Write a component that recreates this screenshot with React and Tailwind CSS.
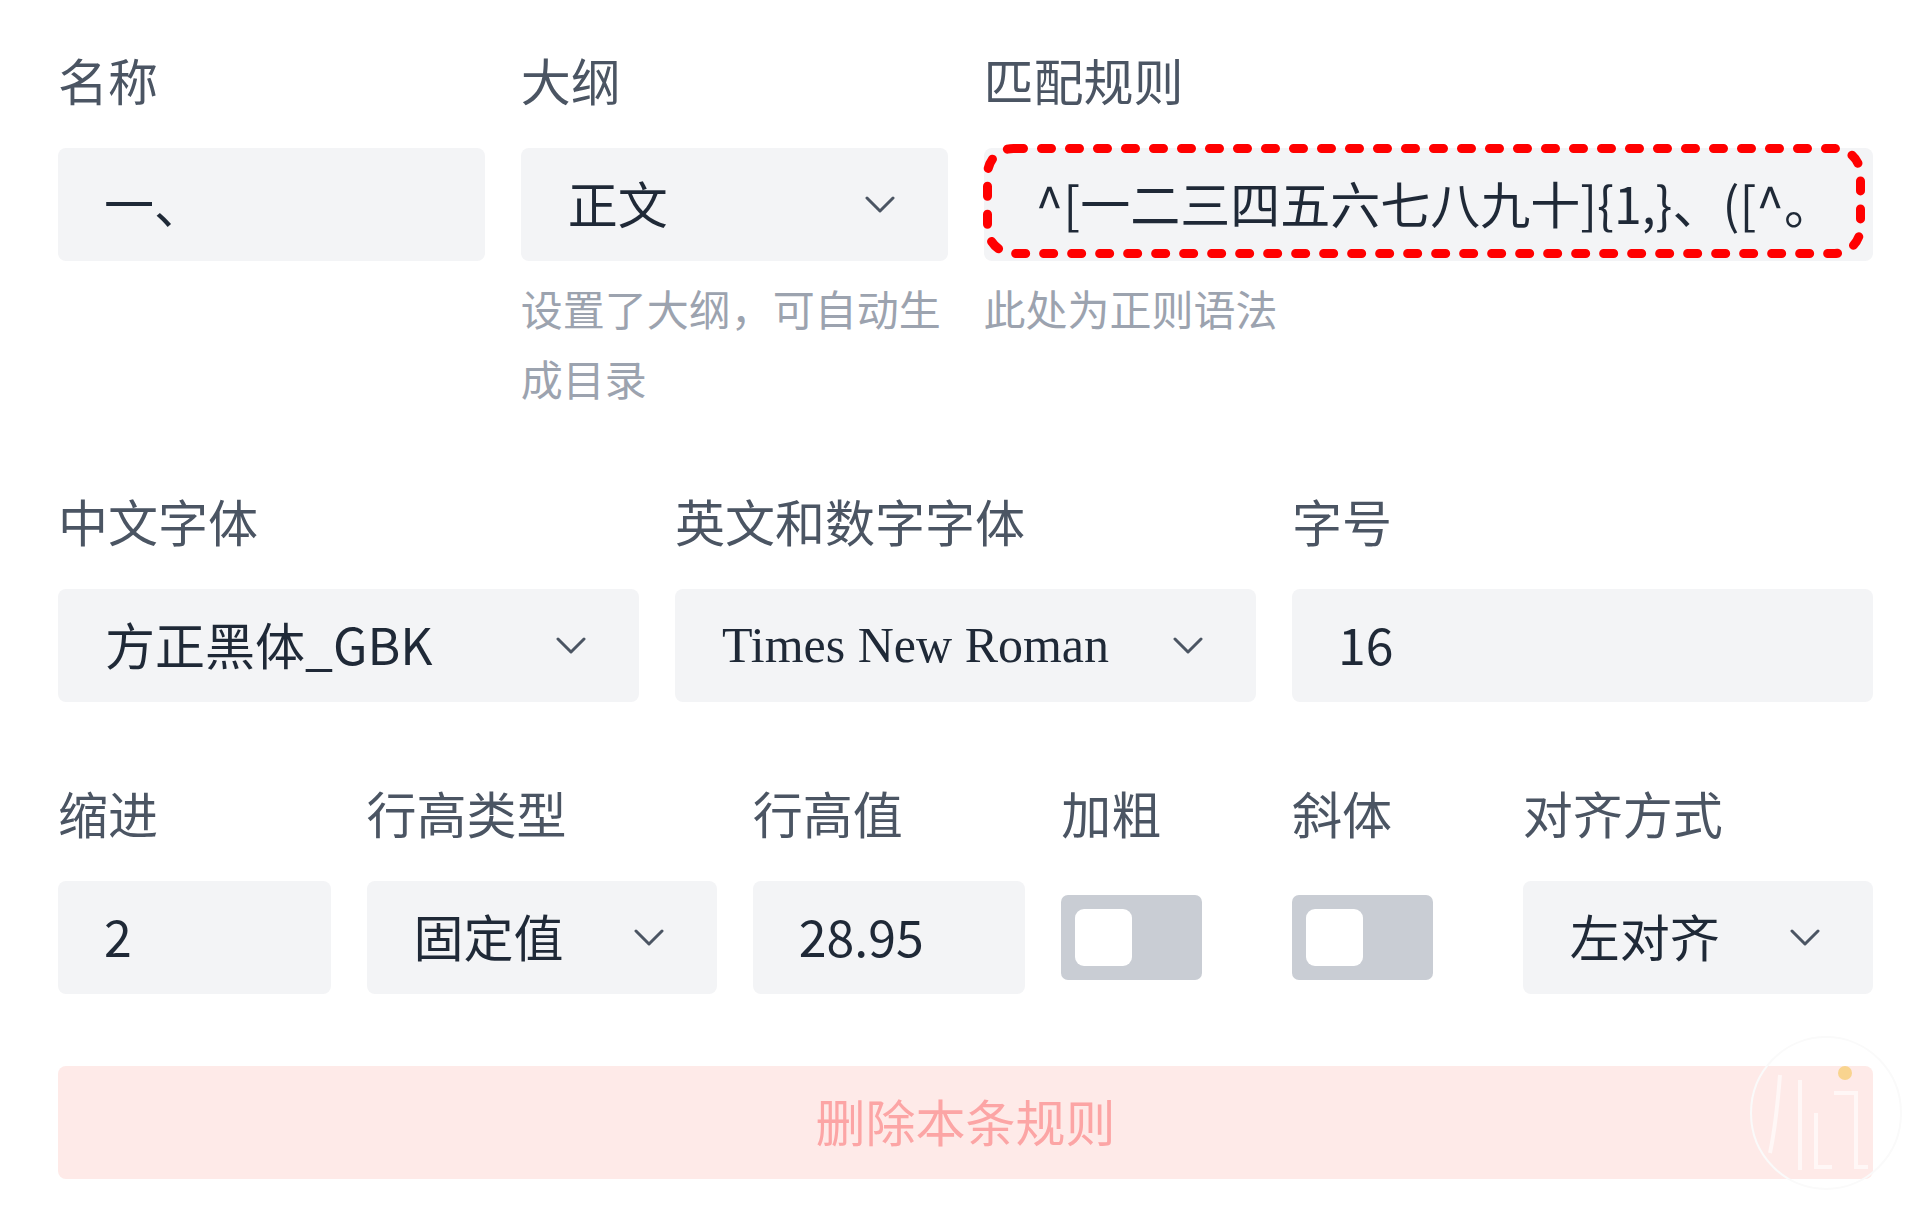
import React, { useState } from "react";

const FONT = "font-['Noto_Sans_CJK_SC',sans-serif]";

const Chevron = () => (
  <svg width="30" height="17" viewBox="0 0 30 17" className="shrink-0">
    <polyline points="2,2 15,15 28,2" fill="none" stroke="#4b5563" strokeWidth="3" strokeLinecap="round" strokeLinejoin="round" />
  </svg>
);

const Label = ({ children }) => (
  <div className="h-[64px] leading-[64px] mb-[37px] text-[50px] text-[#4b5563] whitespace-nowrap">{children}</div>
);

const Field = ({ value, className = "" }) => (
  <div className={`h-[113px] rounded-lg bg-[#f3f4f6] flex items-center pl-[46px] pb-[4px] text-[50px] text-[#1f2937] whitespace-nowrap overflow-hidden ${className}`}>
    {value}
  </div>
);

const Select = ({ value, serif }) => (
  <div className="h-[113px] rounded-lg bg-[#f3f4f6] flex items-center justify-between pl-[47px] pr-[53px] text-[50px] text-[#1f2937] whitespace-nowrap">
    <span className={serif ? "font-['Liberation_Serif',serif]" : "pb-[4px]"}>{value}</span>
    <Chevron />
  </div>
);

const Toggle = ({ on, onClick }) => (
  <div className="h-[113px] flex items-center">
    <button
      onClick={onClick}
      className={`w-[141px] h-[85px] rounded-[7px] p-[14px] flex items-center ${on ? "bg-[#3b82f6] justify-end" : "bg-[#c9cdd4] justify-start"}`}
    >
      <span className="block w-[57px] h-[57px] rounded-[9px] bg-white" />
    </button>
  </div>
);

export default function App() {
  const [bold, setBold] = useState(false);
  const [italic, setItalic] = useState(false);

  return (
    <div className={`relative min-h-[1209px] bg-white pl-[58px] pr-[47px] pt-[47px] ${FONT}`}>
      {/* 第一行 */}
      <div className="grid grid-cols-4 gap-x-[36px]">
        <div>
          <Label>名称</Label>
          <Field value="一、" />
        </div>
        <div>
          <Label>大纲</Label>
          <Select value="正文" />
          <p className="mt-[12px] text-[42px] leading-[70px] text-[#9ca3af]">设置了大纲，可自动生成目录</p>
        </div>
        <div className="col-span-2">
          <Label>匹配规则</Label>
          <div className="relative">
            <Field value="^[一二三四五六七八九十]{1,}、([^。" className="pl-[52px]" />
            <svg className="absolute -left-[1px] -top-[4px] w-[882px] h-[114px] pointer-events-none" viewBox="0 0 882 114">
              <rect x="4.5" y="4.5" width="873" height="105" rx="26" fill="none" stroke="#ff0000" strokeWidth="9" strokeDasharray="10 18" strokeLinecap="round" />
            </svg>
          </div>
          <p className="mt-[12px] text-[42px] leading-[70px] text-[#9ca3af]">此处为正则语法</p>
        </div>
      </div>

      {/* 第二行 */}
      <div className="mt-[75px] grid grid-cols-3 gap-x-[36px]">
        <div>
          <Label>中文字体</Label>
          <Select value="方正黑体_GBK" />
        </div>
        <div>
          <Label>英文和数字字体</Label>
          <Select value="Times New Roman" serif />
        </div>
        <div>
          <Label>字号</Label>
          <Field value="16" />
        </div>
      </div>

      {/* 第三行 */}
      <div className="mt-[78px] grid grid-cols-[7fr_9fr_7fr_5fr_5fr_9fr] gap-x-[36px]">
        <div>
          <Label>缩进</Label>
          <Field value="2" />
        </div>
        <div>
          <Label>行高类型</Label>
          <Select value="固定值" />
        </div>
        <div>
          <Label>行高值</Label>
          <Field value="28.95" />
        </div>
        <div>
          <Label>加粗</Label>
          <Toggle on={bold} onClick={() => setBold(!bold)} />
        </div>
        <div>
          <Label>斜体</Label>
          <Toggle on={italic} onClick={() => setItalic(!italic)} />
        </div>
        <div>
          <Label>对齐方式</Label>
          <Select value="左对齐" />
        </div>
      </div>

      <button className="mt-[72px] w-full h-[113px] rounded-lg bg-[#feeae8] pb-[4px] text-[50px] text-[#fca5a5]">删除本条规则</button>

      {/* 右下角水印 */}
      <svg className="absolute left-[1748px] top-[1035px] w-[156px] h-[156px] pointer-events-none" viewBox="0 0 156 156">
        <ellipse cx="78" cy="78" rx="75" ry="76" fill="none" stroke="#fafafa" strokeWidth="2" />
        <path d="M32 40 Q28 90 22 118" fill="none" stroke="#ffffff" strokeWidth="4" opacity="0.6" />
        <path d="M52 45 L52 135 M68 78 L68 132 L84 132" fill="none" stroke="#ffffff" strokeWidth="4" opacity="0.6" />
        <path d="M86 58 L108 58 L108 132 L120 132" fill="none" stroke="#ffffff" strokeWidth="4" opacity="0.6" />
        <circle cx="97" cy="38" r="7" fill="#f9d48f" />
      </svg>
    </div>
  );
}
